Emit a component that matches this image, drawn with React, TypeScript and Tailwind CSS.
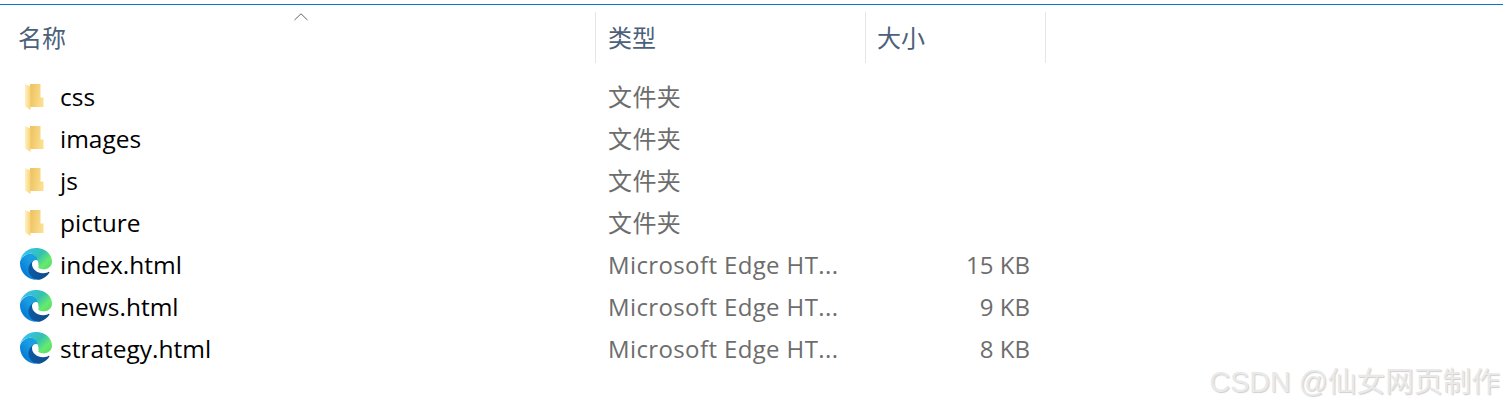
import React from "react";

const font = { fontFamily: '"Open Sans","Noto Sans CJK SC",sans-serif' };

function Folder() {
  return (
    <svg width="19" height="28" viewBox="0 0 19 28" className="block shrink-0">
      <defs>
        <linearGradient id="fb" x1="0" y1="0" x2="1" y2="0.2">
          <stop offset="0" stopColor="#eebf5e" />
          <stop offset="1" stopColor="#fbdf8e" />
        </linearGradient>
        <linearGradient id="ff" x1="0" y1="0" x2="1" y2="0">
          <stop offset="0" stopColor="#fff2c0" />
          <stop offset="1" stopColor="#f6d47a" />
        </linearGradient>
      </defs>
      <path d="M5 1H15.5V14.5H18.5V24H5Z" fill="url(#fb)" />
      <path d="M0 1L5.5 3.5V27L0 23.5Z" fill="url(#ff)" />
    </svg>
  );
}

function Edge() {
  return (
    <svg width="32" height="32" viewBox="0 0 256 256" className="block shrink-0">
      <defs>
        <linearGradient id="e1" x1="0.1" y1="0.6" x2="0.95" y2="0.6">
          <stop offset="0" stopColor="#0c59a4" />
          <stop offset="1" stopColor="#114a8b" />
        </linearGradient>
        <linearGradient id="e2" x1="0.6" y1="0.4" x2="0.1" y2="0.9">
          <stop offset="0" stopColor="#1b9de2" />
          <stop offset="0.2" stopColor="#1595df" />
          <stop offset="0.7" stopColor="#0680d7" />
          <stop offset="1" stopColor="#0078d4" />
        </linearGradient>
        <linearGradient id="e3" x1="0.1" y1="0.2" x2="0.95" y2="0.75">
          <stop offset="0" stopColor="#35c1f1" />
          <stop offset="0.5" stopColor="#34c1b0" />
          <stop offset="0.85" stopColor="#66eb6e" />
          <stop offset="1" stopColor="#5ee06a" />
        </linearGradient>
      </defs>
      <path
        d="M231.05 190.54c-3.41 1.78-6.93 3.35-10.54 4.69-11.48 4.3-23.64 6.48-35.9 6.46-47.32 0-88.54-32.55-88.54-74.32.12-11.39 6.37-21.81 16.37-27.26-42.8 1.8-53.8 46.4-53.8 72.53 0 73.88 68.09 81.37 82.76 81.37 7.91 0 19.84-2.3 27-4.56l1.31-.44c27.56-9.53 50.91-28.16 66.2-52.93 1.15-1.91-.85-3.92-2.86-3z"
        fill="url(#e1)"
      />
      <path
        d="M105.73 241.42a79.2 79.2 0 0 1-22.72-21.32 80.8 80.8 0 0 1 29.56-120.13c3.2-1.51 8.67-4.24 15.95-4.11a33.2 33.2 0 0 1 26.37 13.35 32.7 32.7 0 0 1 6.53 19.13c0-.22 25.12-81.74-82.15-81.74C35.19 46.6-1.88 89.38 0 121.2a133.7 133.7 0 0 0 12.44 57.54 131.5 131.5 0 0 0 160.64 68.93 77.6 77.6 0 0 1-67.35-6.25z"
        fill="url(#e2)"
      />
      <path
        d="M152.33 148.86c-.83 1.08-3.38 2.57-3.38 5.81 0 2.68 1.74 5.25 4.84 7.41 14.76 10.26 42.58 8.91 42.65 8.91a61.1 61.1 0 0 0 31.06-8.57A63 63 0 0 0 258.7 108.7c.27-23-8.21-38.3-11.64-45.07C225.3 20.86 178.2 0 128 0 60.6 0 5.6 53.6 0 121.2c0-37.54 37.14-74.6 82.15-74.6 3.64 0 14.1.35 27 6.6 11.1 5.4 19.9 13.7 26 23.3 8.3 13 15.5 33.5 17.2 72.4z"
        fill="url(#e3)"
        transform="translate(-3 0)"
      />
    </svg>
  );
}

const rows = [
  { name: "css", type: "文件夹", size: "", icon: "f" },
  { name: "images", type: "文件夹", size: "", icon: "f" },
  { name: "js", type: "文件夹", size: "", icon: "f" },
  { name: "picture", type: "文件夹", size: "", icon: "f" },
  { name: "index.html", type: "Microsoft Edge HT...", size: "15 KB", icon: "e" },
  { name: "news.html", type: "Microsoft Edge HT...", size: "9 KB", icon: "e" },
  { name: "strategy.html", type: "Microsoft Edge HT...", size: "8 KB", icon: "e" },
];

export default function App() {
  return (
    <div className="relative h-[409px] w-[1503px] overflow-hidden bg-white" style={font}>
      <div className="pt-[4px]">
        <div className="h-[1px] bg-[#0078d7]" />
      </div>
      <div className="mt-[7px] flex h-[51px] text-[24px] leading-[51px] text-[#4c607a]">
        <div className="relative w-[595px] pl-[18px]">
          名称
          <svg width="14" height="8" viewBox="0 0 14 8" className="absolute left-[294px] top-[1px]">
            <path d="M.5 7L7 .8 13.5 7" fill="none" stroke="#666" strokeWidth="1" />
          </svg>
        </div>
        <div className="w-[270px] border-l border-[#e5e5e5] pl-[12px]">类型</div>
        <div className="w-[180px] border-l border-[#e5e5e5] pl-[11px]">大小</div>
        <div className="border-l border-[#e5e5e5]" />
      </div>
      <div className="mt-[13px] flex flex-col">
        {rows.map((r) => (
          <div key={r.name} className="flex h-[42px] items-center text-[24px]">
            <div className="flex w-[595px] items-center">
              <div className="flex w-[60px] shrink-0 items-center justify-start pl-[20px]">
                {r.icon === "f" ? (
                  <span className="pl-[5px]">
                    <Folder />
                  </span>
                ) : (
                  <span className="mb-[2px]">
                    <Edge />
                  </span>
                )}
              </div>
              <span className="text-[24.5px] text-black">{r.name}</span>
            </div>
            <div className="w-[270px] pl-[13px] text-[#6d6d6d] tracking-[0.38px]">{r.type}</div>
            <div className="w-[165px] text-right text-[#6d6d6d]">{r.size}</div>
          </div>
        ))}
      </div>
      <div
        className="absolute bottom-[9px] right-[3px] text-[28.7px] leading-[36px] text-[#e9e9e9]"
        style={{ fontFamily: '"Liberation Sans","Noto Sans CJK SC",sans-serif', textShadow: "1px 1px 1px #d0d0d0" }}
      >
        CSDN @仙女网页制作
      </div>
    </div>
  );
}
